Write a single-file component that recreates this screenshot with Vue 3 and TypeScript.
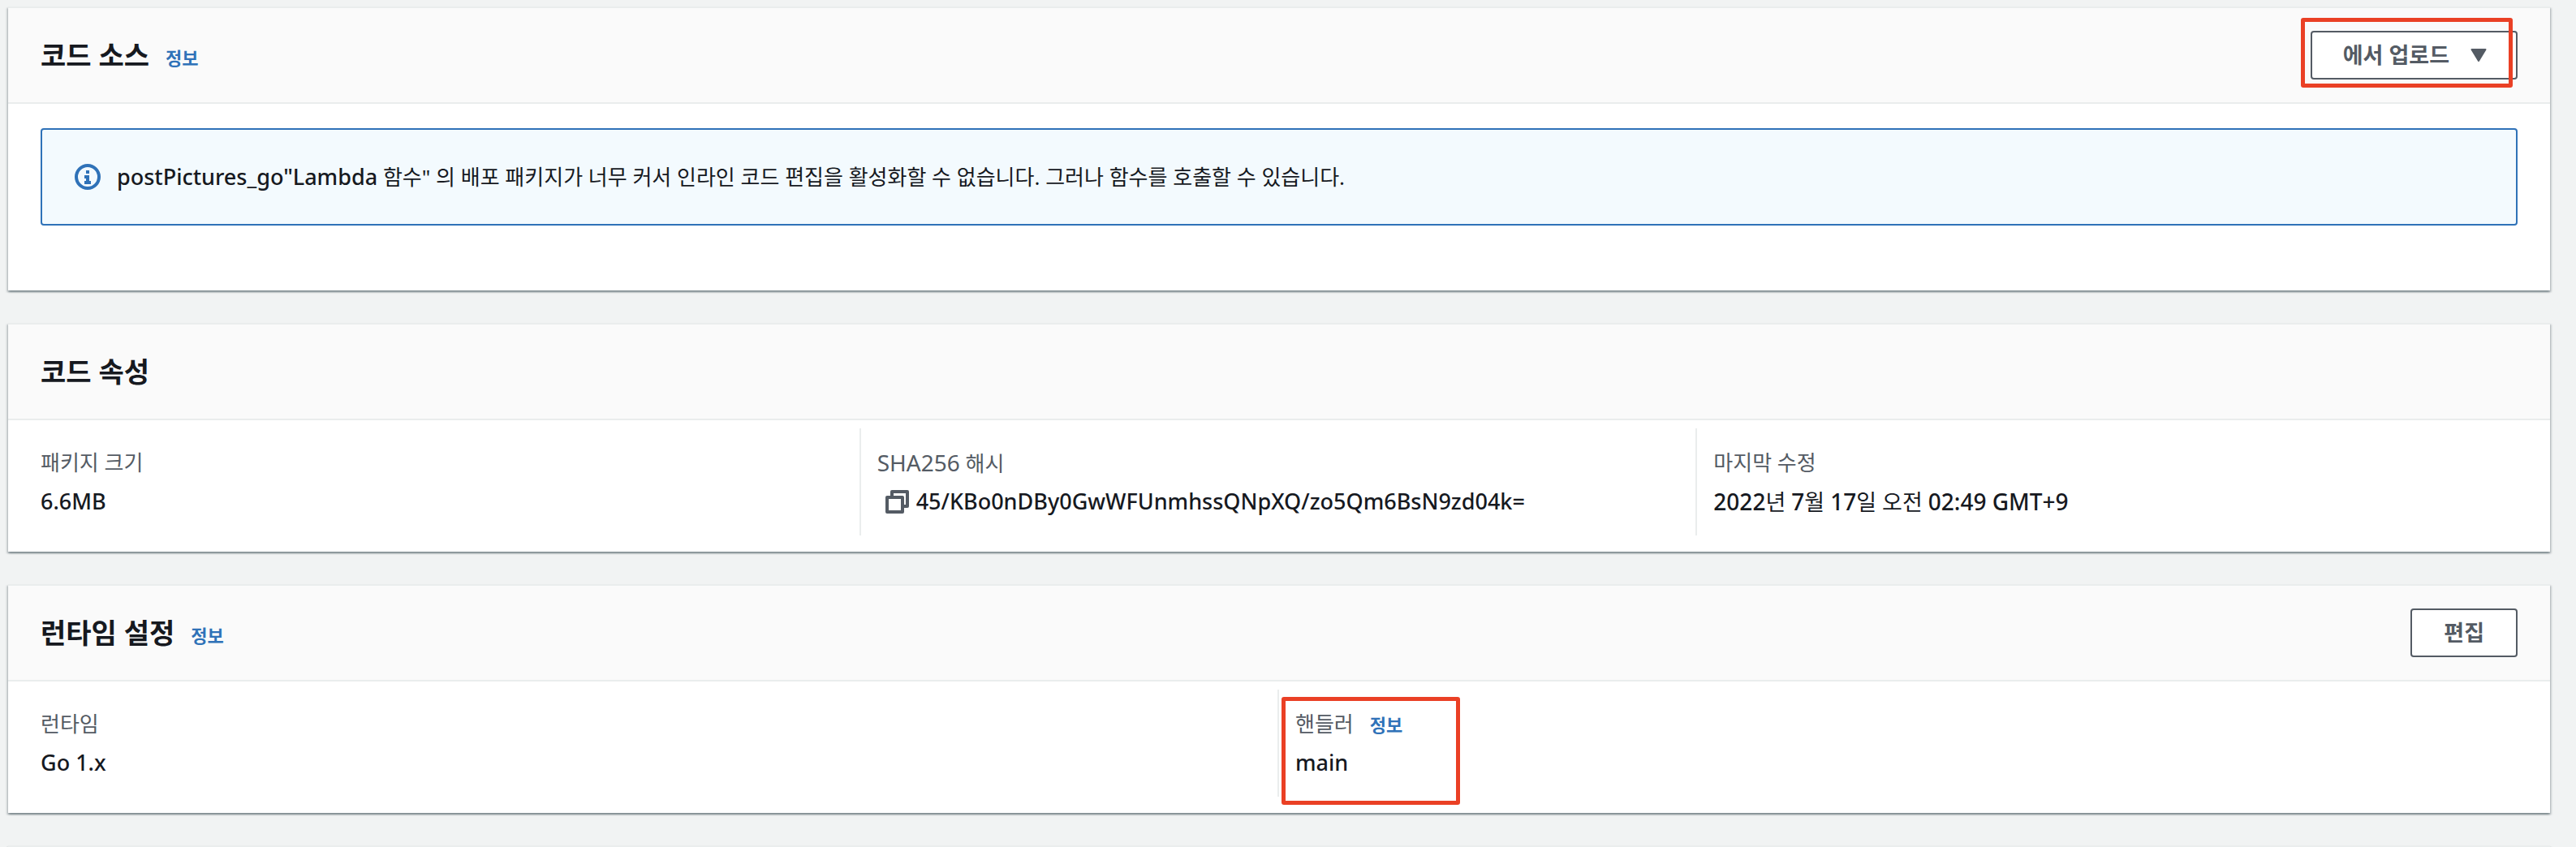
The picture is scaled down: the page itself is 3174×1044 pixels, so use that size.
<script setup lang="ts">
const functionName = 'postPictures_go"Lambda'
const packageSize = '6.6MB'
const sha256 = '45/KBo0nDBy0GwWFUnmhssQNpXQ/zo5Qm6BsN9zd04k='
const runtime = 'Go 1.x'
const handler = 'main'

function copyHash(): void {
  navigator.clipboard?.writeText(sha256)
}
</script>

<template>
  <main class="page">
    <section class="card">
      <header class="card-header">
        <h2>코드 소스</h2>
        <a class="info" href="#code-source">정보</a>
        <div class="marked action">
          <button type="button" class="btn dropdown">
            에서 업로드
            <svg class="caret" viewBox="0 0 20 16" aria-hidden="true">
              <path d="M1.500 1h17L10 15z" fill="currentColor" stroke="currentColor" stroke-width="2" stroke-linejoin="round" />
            </svg>
          </button>
          <span class="mark mark-upload"></span>
        </div>
      </header>
      <div class="source-body">
        <div class="alert" role="status">
          <svg class="info-icon" viewBox="0 0 32 32" aria-hidden="true">
            <circle cx="16" cy="16" r="14" fill="none" stroke="currentColor" stroke-width="4" />
            <path d="M14 8h4v4h-4zM12 14h6v7h2v4h-8v-4h2v-3h-2z" fill="currentColor" />
          </svg>
          <p><span class="latin">{{ functionName }}</span> 함수" 의 배포 패키지가 너무 커서 인라인 코드 편집을 활성화할 수 없습니다. 그러나 함수를 호출할 수 있습니다.</p>
        </div>
      </div>
    </section>

    <section class="card">
      <header class="card-header">
        <h2>코드 속성</h2>
      </header>
      <dl class="columns three">
        <div class="column">
          <dt>패키지 크기</dt>
          <dd class="latin">{{ packageSize }}</dd>
        </div>
        <div class="column">
          <dt><span class="figures">SHA256</span> 해시</dt>
          <dd class="latin hash">
            <button type="button" class="copy" aria-label="복사" @click="copyHash">
              <svg viewBox="0 0 32 32" aria-hidden="true">
                <path d="M4 11h19v18H4z" fill="none" stroke="currentColor" stroke-width="4" stroke-linejoin="round" />
                <path d="M10 10V4h19v18h-5" fill="none" stroke="currentColor" stroke-width="4" stroke-linejoin="round" />
              </svg>
            </button>
            {{ sha256 }}
          </dd>
        </div>
        <div class="column">
          <dt>마지막 수정</dt>
          <dd><span class="figures">2022</span>년 <span class="figures">7</span>월 <span class="figures">17</span>일 오전 <span class="figures">02:49 GMT+9</span></dd>
        </div>
      </dl>
    </section>

    <section class="card">
      <header class="card-header">
        <h2>런타임 설정</h2>
        <a class="info" href="#runtime">정보</a>
        <button type="button" class="btn action">편집</button>
      </header>
      <dl class="columns two">
        <div class="column">
          <dt>런타임</dt>
          <dd class="latin">{{ runtime }}</dd>
        </div>
        <div class="column marked">
          <dt>핸들러<a class="info" href="#handler">정보</a></dt>
          <dd class="latin">{{ handler }}</dd>
          <span class="mark mark-handler"></span>
        </div>
      </dl>
    </section>

    <section class="card"></section>
  </main>
</template>

<style>
html,
body {
  margin: 0;
  background: #f1f3f3;
}
</style>

<style scoped>
.page {
  display: flex;
  flex-direction: column;
  gap: 40px;
  padding: 8px 32px 0 10px;
  color: #16191f;
  font-family: "Noto Sans", "Noto Sans CJK KR", sans-serif;
  font-size: 27px;
  line-height: 44px;
}

.card {
  border-top: 2px solid #eaeded;
  background: #fff;
  box-shadow:
    0 2px 2px rgba(0, 28, 36, 0.3),
    2px 2px 2px rgba(0, 28, 36, 0.15),
    -2px 2px 2px rgba(0, 28, 36, 0.15);
}

.card-header {
  display: flex;
  align-items: center;
  height: 116px;
  padding: 0 40px;
  border-bottom: 2px solid #eaeded;
  background: #fafafa;
}

h2 {
  margin: 0;
  font-size: 34px;
  font-weight: 700;
}

.info {
  margin-left: 20px;
  color: #2f72b8;
  font-size: 22px;
  font-weight: 700;
  text-decoration: none;
}

.card-header .info {
  padding-top: 6px;
}

.action {
  margin-left: auto;
}

.btn {
  display: flex;
  align-items: center;
  height: 60px;
  box-sizing: border-box;
  padding: 0 39px;
  border: 2px solid #545b64;
  border-radius: 4px;
  background: #fff;
  color: #545b64;
  font: inherit;
  font-weight: 700;
}

.dropdown {
  gap: 26px;
  padding: 0 36px 0 38px;
}

.caret {
  width: 20px;
  height: 16px;
}

.marked {
  position: relative;
}

.mark {
  position: absolute;
  box-sizing: border-box;
  border: 5px solid #ea4025;
  border-radius: 3px;
  pointer-events: none;
}

.mark-upload {
  inset: -16px 6px -10px -12px;
}

.mark-handler {
  top: 9px;
  left: 3px;
  width: 220px;
  height: 133px;
}

.source-body {
  padding: 30px 40px 80px;
}

.alert {
  display: flex;
  align-items: center;
  gap: 20px;
  height: 120px;
  box-sizing: border-box;
  padding: 0 40px;
  border: 2px solid #2f72b8;
  border-radius: 4px;
  background: #f3fafe;
}

.info-icon {
  flex: none;
  width: 32px;
  height: 32px;
  color: #2f72b8;
}

.alert p {
  margin: 0;
  font-size: 26px;
}

.latin {
  font-size: 27px;
  font-weight: 500;
}

.figures {
  font-size: 28px;
}

dd .figures {
  font-weight: 500;
}

.columns {
  display: grid;
  margin: 0;
  padding: 10px 22px 20px 18px;
}

.three {
  grid-template-columns: repeat(3, 1fr);
}

.two {
  grid-template-columns: repeat(2, 1fr);
}

.column {
  display: flex;
  flex-direction: column;
  gap: 4px;
  padding: 20px;
  border-left: 2px solid #eaeded;
}

.column:first-child {
  border-left-color: transparent;
}

dt {
  height: 44px;
  color: #545b64;
  font-size: 26px;
}

dd {
  height: 44px;
  margin: 0;
}

.hash {
  display: flex;
  align-items: center;
  gap: 8px;
  padding-left: 8px;
}

.copy {
  display: flex;
  padding: 0;
  border: 0;
  background: none;
  color: #545b64;
}

.copy svg {
  width: 32px;
  height: 32px;
}
</style>
